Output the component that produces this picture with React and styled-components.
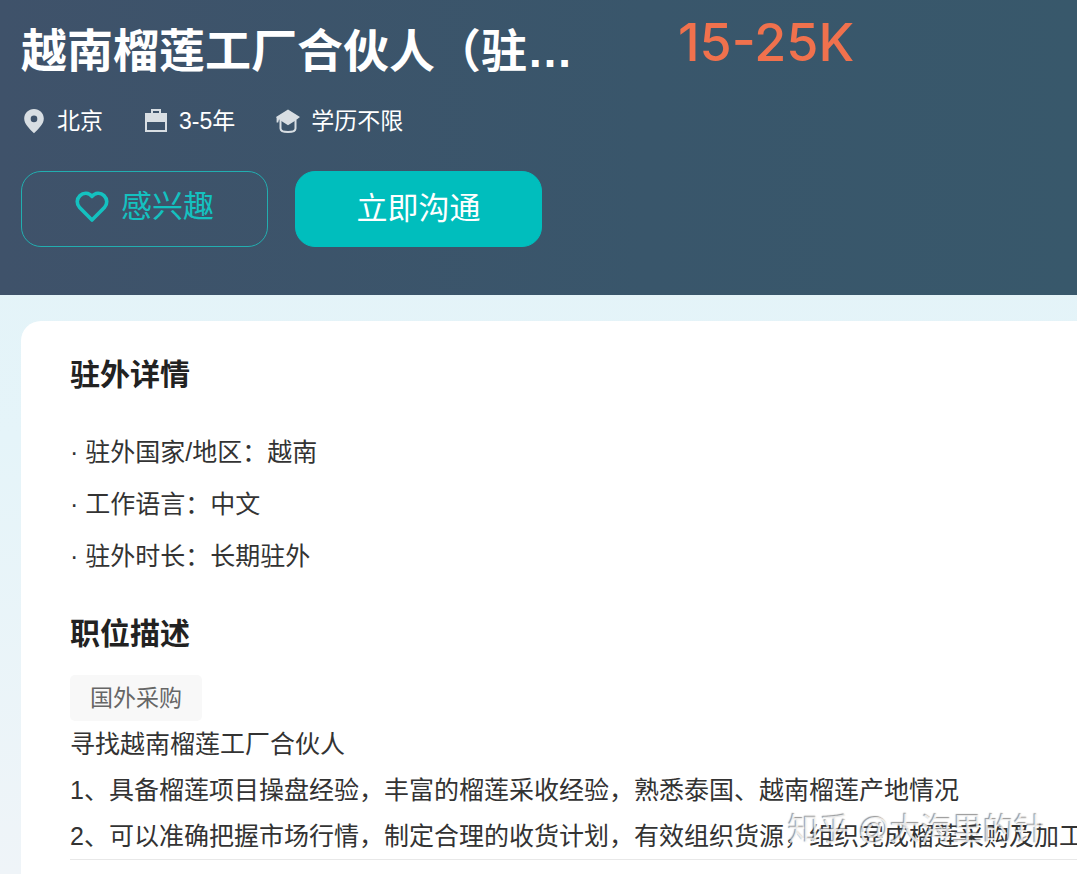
import React from "react";
import styled, { createGlobalStyle } from "styled-components";

const GlobalStyle = createGlobalStyle`
  * { box-sizing: border-box; }
  body {
    margin: 0;
    color: #333;
    background: #eff4f8;
    font-family: "Liberation Sans", "Noto Sans CJK SC", sans-serif;
  }
  h1, h2, p, ul { margin: 0; padding: 0; }
`;

const Page = styled.div`
  position: relative;
  min-height: 100vh;
  display: flex;
  flex-direction: column;
  overflow: hidden;
  background: linear-gradient(#e2f3f7, #e5f4f9 50%, #eff4f8);
`;

const Header = styled.header`
  padding: 20px 21px 48px;
  color: #fff;
  background: linear-gradient(90deg, #3f526a, #39566b 60%, #38586b);
`;

const TitleRow = styled.div`
  display: flex;
  align-items: flex-start;
  gap: 105px;
`;

const Title = styled.h1`
  font-size: 46px;
  line-height: 62px;
  font-weight: 700;
  white-space: nowrap;
`;

const Salary = styled.span`
  color: #f0714d;
  font-family: Inter, sans-serif;
  font-size: 52px;
  line-height: 46px;
  font-weight: 500;
  font-feature-settings: "case";
  white-space: nowrap;
`;

const MetaList = styled.ul`
  display: flex;
  gap: 40px;
  margin-top: 23px;
  list-style: none;
`;

const MetaItem = styled.li`
  display: flex;
  align-items: center;
  gap: 10px;
  font-size: 23px;
  line-height: 32px;
`;

const MetaIcon = styled.svg`
  width: 26px;
  height: 26px;
  color: #d8dee3;
`;

const Actions = styled.div`
  display: flex;
  gap: 27px;
  margin-top: 34px;
`;

const ActionButton = styled.button`
  display: flex;
  align-items: center;
  justify-content: center;
  gap: 12px;
  width: 247px;
  height: 76px;
  padding: ${(p) => (p.$primary ? "0" : "0 0 4px")};
  border: 1px solid ${(p) => (p.$primary ? "#00bebd" : "#22aeb0")};
  border-radius: 20px;
  background: ${(p) => (p.$primary ? "#00bebd" : "transparent")};
  color: ${(p) => (p.$primary ? "#fff" : "#14c1c0")};
  font-family: inherit;
  font-size: 31px;
  line-height: 42px;
  cursor: pointer;
`;

const HeartIcon = styled.svg`
  width: 34px;
  height: 32px;
`;

const Card = styled.main`
  flex: 1;
  margin: 26px 0 0 21px;
  padding: 32px 0 14px 49px;
  border-radius: 20px 0 0 0;
  background: #fff;
`;

const Section = styled.section`
  & + & { margin-top: 30px; }
`;

const SectionTitle = styled.h2`
  color: #222;
  font-size: 30px;
  line-height: 44px;
  font-weight: 700;
`;

const DetailList = styled.ul`
  margin-top: 29px;
  list-style: none;
  font-size: 25px;
  line-height: 52px;
`;

const Tag = styled.span`
  display: block;
  width: fit-content;
  margin-top: 19px;
  padding: 0 20px;
  border-radius: 5px;
  background: #f8f8f8;
  color: #666;
  font-size: 23px;
  line-height: 46px;
`;

const Description = styled.div`
  border-bottom: 1px solid #e8e8e8;
  font-size: 25px;
  line-height: 46px;
  white-space: nowrap;
`;

const Watermark = styled.span`
  position: absolute;
  right: 32px;
  bottom: 22px;
  color: rgba(255, 255, 255, 0.8);
  font-size: 31px;
  line-height: 44px;
  text-shadow: -1px -1px 1px rgba(80, 80, 80, 0.6);
  white-space: nowrap;
  pointer-events: none;
`;

const PinIcon = () => (
  <MetaIcon viewBox="0 0 26 26" aria-hidden="true">
    <path fill="currentColor" fillRule="evenodd" d="M13 1C7.5 1 3.200 5.300 3.200 10.600C3.200 16 8 20.500 13 25.300C18 20.500 22.800 16 22.800 10.600C22.800 5.300 18.500 1 13 1ZM13 7.600A3.300 3.300 0 1 1 13 14.200A3.300 3.300 0 0 1 13 7.600Z" />
  </MetaIcon>
);

const CaseIcon = () => (
  <MetaIcon viewBox="0 0 26 26" aria-hidden="true">
    <path fill="currentColor" fillRule="evenodd" d="M8 1H18V5H24V24H2V5H8ZM10 3V5H16V3ZM4 14V22H22V14Z" />
  </MetaIcon>
);

const CapIcon = () => (
  <MetaIcon viewBox="0 0 26 26" aria-hidden="true">
    <path fill="currentColor" d="M13 1.500L25 9L20.500 12.500L13 17.200L4 11.500L3.200 14.500H1.600V10L1 9Z" />
    <path fill="none" stroke="currentColor" strokeWidth="2" d="M5.500 12V20.500Q5.500 24 13 24Q20.500 24 20.500 20.500V12" />
  </MetaIcon>
);

const meta = [
  { Icon: PinIcon, label: "北京" },
  { Icon: CaseIcon, label: "3-5年" },
  { Icon: CapIcon, label: "学历不限" },
];

const details = ["驻外国家/地区：越南", "工作语言：中文", "驻外时长：长期驻外"];

const description = [
  "寻找越南榴莲工厂合伙人",
  "1、具备榴莲项目操盘经验，丰富的榴莲采收经验，熟悉泰国、越南榴莲产地情况",
  "2、可以准确把握市场行情，制定合理的收货计划，有效组织货源，组织完成榴莲采购及加工",
];

export default function App() {
  return (
    <Page lang="zh-CN">
      <GlobalStyle />
      <Header>
        <TitleRow>
          <Title>越南榴莲工厂合伙人（驻…</Title>
          <Salary>15-25K</Salary>
        </TitleRow>
        <MetaList>
          {meta.map(({ Icon, label }) => (
            <MetaItem key={label}>
              <Icon />
              {label}
            </MetaItem>
          ))}
        </MetaList>
        <Actions>
          <ActionButton type="button">
            <HeartIcon viewBox="0 0 34 32" aria-hidden="true">
              <path
                fill="none"
                stroke="currentColor"
                strokeWidth="3.600"
                strokeLinejoin="round"
                d="M17 5.500C14 1.500 8.500 1.200 5 4.600C1.500 8 1.300 13 4.600 16.600L17 29L29.400 16.600C32.700 13 32.500 8 29 4.600C25.500 1.200 20 1.500 17 5.500Z"
              />
            </HeartIcon>
            感兴趣
          </ActionButton>
          <ActionButton type="button" $primary>立即沟通</ActionButton>
        </Actions>
      </Header>
      <Card>
        <Section>
          <SectionTitle>驻外详情</SectionTitle>
          <DetailList>
            {details.map((text) => (
              <li key={text}>· {text}</li>
            ))}
          </DetailList>
        </Section>
        <Section>
          <SectionTitle>职位描述</SectionTitle>
          <Tag>国外采购</Tag>
          <Description>
            {description.map((text) => (
              <p key={text}>{text}</p>
            ))}
          </Description>
        </Section>
      </Card>
      <Watermark>知乎 @大海里的针</Watermark>
    </Page>
  );
}
